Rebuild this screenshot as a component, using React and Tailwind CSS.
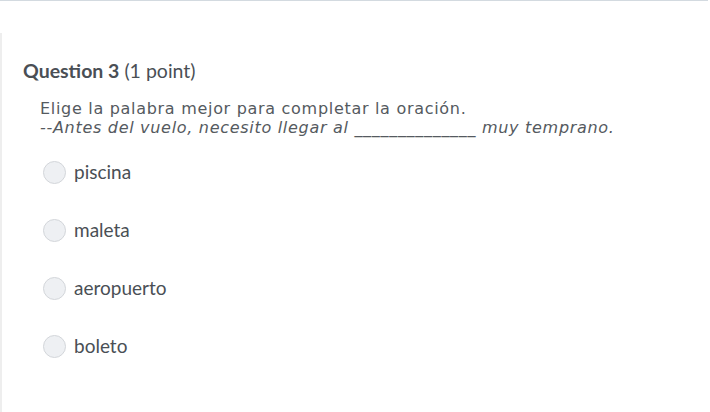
import React from "react";

const options = ["piscina", "maleta", "aeropuerto", "boleto"];

const App = () => {
  return (
    <div className="w-[710px] h-[412px] bg-white overflow-hidden">
      <div className="h-[1px] w-[708px] bg-[#d3dae0]"></div>
      <div className="mt-[32px] h-[379px] border-l-[2px] border-[#eeeeee] pl-[21px] pt-[27px]">
        <p className="font-['Lato',sans-serif] text-[19.5px] leading-[22px] text-[#4a4f55]">
          <span className="font-bold">Question 3</span> (1 point)
        </p>
        <div className="mt-[17px] pl-[17px] font-['DejaVu_Sans',sans-serif] text-[16px] leading-[19px] tracking-[0.7px] text-[#555a60]">
          <p>Elige la palabra mejor para completar la oración.</p>
          <p className="italic">
            --Antes del vuelo, necesito llegar al ______________ muy temprano.
          </p>
        </div>
        <div className="mt-[24px] pl-[20px] flex flex-col gap-[35px]">
          {options.map((o) => (
            <label key={o} className="flex items-center gap-[8px] h-[23px]">
              <span className="w-[23px] h-[23px] rounded-full bg-[#eef0f3] border border-[#d3d6da]"></span>
              <span className="font-['Lato',sans-serif] text-[19px] text-[#4a4f55]">{o}</span>
            </label>
          ))}
        </div>
      </div>
    </div>
  );
};

export default App;
